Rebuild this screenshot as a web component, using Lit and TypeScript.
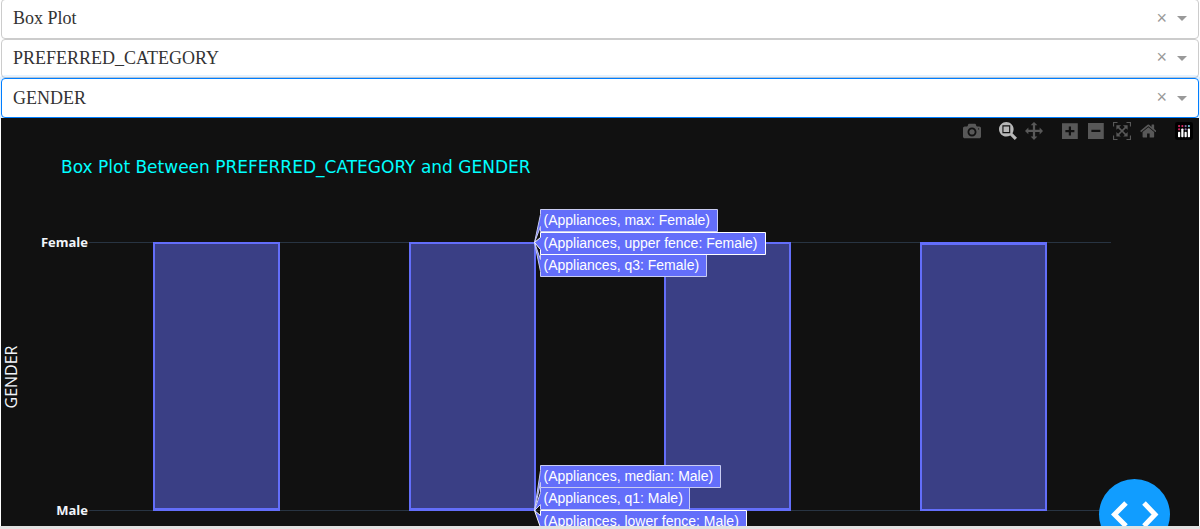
import { LitElement, html, svg, css } from "lit";
import { customElement, property, state } from "lit/decorators.js";

@customElement("clearable-select")
class ClearableSelect extends LitElement {
  @property() label = "";
  @property() value = "";
  @property({ type: Array }) options: string[] = [];
  @property({ type: Boolean }) active = false;

  static styles = css`
    :host {
      display: grid;
      min-height: 0;
    }
    .box {
      grid-area: 1 / 1;
      appearance: none;
      width: 100%;
      min-height: 0;
      margin: 0;
      padding: 0 60px 1px 11px;
      border: 1px solid #ccc;
      border-radius: 4px;
      outline: none;
      background: #fff;
      color: #333;
      font: 18px/20px "Liberation Serif", serif;
    }
    .box.active {
      border-color: #007eff;
      box-shadow: 0 0 0 3px rgba(0, 126, 255, 0.1);
    }
    .tools {
      grid-area: 1 / 1;
      justify-self: end;
      align-self: center;
      display: flex;
      align-items: center;
      gap: 10px;
      padding-right: 12px;
      pointer-events: none;
    }
    .clear {
      pointer-events: auto;
      display: flex;
      padding: 0 0 2px;
      border: 0;
      background: none;
      color: #999;
      font: 18px/18px "Liberation Sans", sans-serif;
    }
    .arrow {
      width: 0;
      border: 5px solid transparent;
      border-top-color: #999;
      border-bottom: 0;
    }
  `;

  clear() {
    this.value = "";
  }

  render() {
    return html`
      <select
        class="box ${this.active ? "active" : ""}"
        aria-label=${this.label}
      >
        ${this.options.map(
          (o) => html`<option ?selected=${o === this.value}>${o}</option>`
        )}
      </select>
      <div class="tools">
        <button class="clear" aria-label="Clear value" @click=${this.clear}>×</button>
        <span class="arrow"></span>
      </div>
    `;
  }
}

const ICONS: Record<string, string> = {
  camera:
    "m500 450c-83 0-150-67-150-150 0-83 67-150 150-150 83 0 150 67 150 150 0 83-67 150-150 150z m400 150h-120c-16 0-34 13-39 29l-31 93c-6 15-23 28-40 28h-340c-16 0-34-13-39-28l-31-94c-6-15-23-28-40-28h-120c-55 0-100-45-100-100v-450c0-55 45-100 100-100h800c55 0 100 45 100 100v450c0 55-45 100-100 100z m-400-550c-138 0-250 112-250 250 0 138 112 250 250 250 138 0 250-112 250-250 0-138-112-250-250-250z m365 380c-19 0-35 16-35 35 0 19 16 35 35 35 19 0 35-16 35-35 0-19-16-35-35-35z",
  zoom:
    "m1000-25l-250 251c40 63 63 138 63 218 0 224-182 406-407 406-224 0-406-182-406-406s183-406 407-406c80 0 155 22 218 62l250-250 125 125z m-812 250l0 438 437 0 0-438-437 0z m62 375l313 0 0-312-313 0 0 312z",
  pan:
    "m1000 350l-187 188 0-125-250 0 0 250 125 0-188 187-187-187 125 0 0-250-250 0 0 125-188-188 186-187 0 125 252 0 0-250-125 0 187-188 188 188-125 0 0 250 250 0 0-126 187 188z",
  plus:
    "m1 787l0-875 875 0 0 875-875 0z m687-500l-187 0 0-187-125 0 0 187-188 0 0 125 188 0 0 187 125 0 0-187 187 0 0-125z",
  minus:
    "m0 788l0-876 875 0 0 876-875 0z m688-500l-500 0 0 125 500 0 0-125z",
  autoscale:
    "m250 850l-187 0-63 0 0-62 0-188 63 0 0 188 187 0 0 62z m688 0l-188 0 0-62 188 0 0-188 62 0 0 188 0 62-62 0z m-875-938l0 188-63 0 0-188 0-62 63 0 187 0 0 62-187 0z m875 188l0-188-188 0 0-62 188 0 62 0 0 62 0 188-62 0z m-125 188l-1 0-93-94-156 156 156 156 92-93 2 0 0 250-250 0 0-2 93-92-156-156-156 156 94 92 0 2-250 0 0-250 0 0 93 93 157-156-157-156-93 94 0 0 0-250 250 0 0 0-94 93 156 157 156-157-93-93 0 0 250 0 0 250z",
  home:
    "m786 296v-267q0-15-11-26t-25-10h-214v214h-143v-214h-214q-15 0-25 10t-11 26v267q0 1 0 2t0 2l321 264 321-264q1-1 1-4z m124 39l-34-41q-5-5-12-6h-2q-7 0-12 3l-386 322-386-322q-7-4-13-4-7 2-12 7l-35 41q-4 5-3 12t6 12l401 334q18 15 42 15t43-15l136-114v109q0 8 5 13t13 5h107q8 0 13-5t5-13v-227l122-102q5-5 6-12t-4-13z",
};

interface Tool {
  icon: string;
  title: string;
  width: number;
  on?: boolean;
}

const TOOL_GROUPS: Tool[][] = [
  [{ icon: "camera", title: "Download plot as a png", width: 1000 }],
  [
    { icon: "zoom", title: "Zoom", width: 1000, on: true },
    { icon: "pan", title: "Pan", width: 1000 },
  ],
  [
    { icon: "plus", title: "Zoom in", width: 875 },
    { icon: "minus", title: "Zoom out", width: 875 },
    { icon: "autoscale", title: "Autoscale", width: 1000 },
    { icon: "home", title: "Reset axes", width: 928 },
  ],
];

const MARGIN = { left: 88, right: 88 };
const FEMALE_Y = 124;
const MALE_Y = 392;

// Which end of each box its median line lies on.
const MEDIANS = [MALE_Y, MALE_Y, MALE_Y, FEMALE_Y];

// Hover labels: anchor height, distance from it, and box width.
const LABELS = [
  { text: "(Appliances, max: Female)", y: FEMALE_Y, dy: -22, w: 177 },
  { text: "(Appliances, q3: Female)", y: FEMALE_Y, dy: 23, w: 166 },
  { text: "(Appliances, upper fence: Female)", y: FEMALE_Y, dy: 1, w: 225, strong: true },
  { text: "(Appliances, median: Male)", y: MALE_Y, dy: -34, w: 180 },
  { text: "(Appliances, q1: Male)", y: MALE_Y, dy: -12, w: 149 },
  { text: "(Appliances, lower fence: Male)", y: MALE_Y, dy: 11, w: 206, strong: true },
];

@customElement("box-plot")
class BoxPlot extends LitElement {
  @state() width = 1198;
  private observer?: ResizeObserver;

  static styles = css`
    :host {
      display: block;
      position: relative;
      overflow: hidden;
      background: #111;
    }
    .plot {
      display: block;
      width: 100%;
      height: 450px;
    }
    .title {
      font: 17px "DejaVu Sans", sans-serif;
      fill: #00ffff;
    }
    .tick {
      font: bold 13px "Open Sans", sans-serif;
      fill: #f2f5fa;
      text-anchor: end;
    }
    .axis {
      font: 16px "Open Sans", sans-serif;
      fill: #f2f5fa;
      text-anchor: middle;
    }
    .grid {
      stroke: #283442;
      stroke-width: 1;
    }
    .bar {
      fill: #636efa;
      fill-opacity: 0.5;
      stroke: #636efa;
      stroke-width: 2;
    }
    .median {
      stroke: #636efa;
      stroke-width: 2;
    }
    .tag {
      fill: #636efa;
      stroke: #c9ccf2;
      stroke-width: 1;
    }
    .tag.strong {
      stroke: #fff;
    }
    .tag-text {
      font: 14px "Liberation Sans", sans-serif;
      fill: #fff;
    }
    .modebar {
      position: absolute;
      top: 4px;
      right: 2px;
      display: flex;
      gap: 10px;
    }
    .group {
      display: flex;
    }
    .tool {
      display: flex;
      justify-content: center;
      width: 26px;
      padding: 0;
      border: 0;
      background: none;
      fill: rgba(255, 255, 255, 0.3);
    }
    .tool.on {
      fill: rgba(255, 255, 255, 0.7);
    }
    .icon {
      display: block;
      height: 18px;
    }
    .fab {
      position: absolute;
      right: 29px;
      bottom: -24px;
      display: flex;
      align-items: center;
      justify-content: center;
      width: 71px;
      height: 71px;
      padding: 0;
      border: 0;
      border-radius: 50%;
      background: #119dff;
    }
  `;

  connectedCallback() {
    super.connectedCallback();
    this.observer = new ResizeObserver(() => {
      this.width = this.clientWidth;
    });
    this.observer.observe(this);
  }

  disconnectedCallback() {
    super.disconnectedCallback();
    this.observer?.disconnect();
  }

  renderTag(x: number, l: (typeof LABELS)[number]) {
    const h = 22;
    const d = `M0,0L6,${l.dy + 6}v${h / 2 - 6}h${l.w}v-${h}H6V${l.dy - 6}Z`;
    return svg`
      <g transform="translate(${x - 0.5} ${l.y + 0.5})">
        <path class="tag ${l.strong ? "strong" : ""}" d=${d}></path>
        <text class="tag-text" x="9" y=${l.dy + 4}>${l.text}</text>
      </g>`;
  }

  render() {
    const right = this.width - MARGIN.right;
    const step = (right - MARGIN.left) / MEDIANS.length;
    const half = step * 0.245;
    const center = (i: number) => MARGIN.left + step * (i + 0.5);
    return html`
      <svg class="plot" role="img" aria-label="Box plot">
        <text class="title" x="60" y="55">Box Plot Between PREFERRED_CATEGORY and GENDER</text>
        ${[FEMALE_Y, MALE_Y].map(
          (y) => svg`<line class="grid" x1=${MARGIN.left} x2=${right} y1=${y + 0.5} y2=${y + 0.5}></line>`
        )}
        <text class="tick" x="87" y="129">Female</text>
        <text class="tick" x="87" y="397">Male</text>
        <text class="axis" transform="translate(16 259) rotate(-90)">GENDER</text>
        ${MEDIANS.map((m, i) => {
          const x = Math.round(center(i) - half);
          const w = Math.round(half * 2);
          const my = m === MALE_Y ? MALE_Y - 1 : FEMALE_Y + 2;
          return svg`
            <rect class="bar" x=${x} y=${FEMALE_Y + 1} width=${w} height=${MALE_Y - FEMALE_Y - 1}></rect>
            <line class="median" x1=${x} x2=${x + w} y1=${my} y2=${my}></line>`;
        })}
        ${LABELS.map((l) => this.renderTag(Math.round(center(1) + half), l))}
      </svg>
      <div class="modebar">
        ${TOOL_GROUPS.map(
          (g) => html`<div class="group">
            ${g.map(
              (t) => html`<button class="tool ${t.on ? "on" : ""}" aria-label=${t.title}>
                <svg class="icon" viewBox="0 0 ${t.width} 1000">
                  <path transform="matrix(1 0 0 -1 0 850)" d=${ICONS[t.icon]}></path>
                </svg>
              </button>`
            )}
          </div>`
        )}
        <div class="group">
          <button class="tool" aria-label="Produced with Plotly">
            <svg class="icon" viewBox="0 0 132 132">
              <rect fill="#000" width="132" height="132" rx="18"></rect>
              <g fill="#d92a63">
                <circle cx="30" cy="30" r="8"></circle>
                <circle cx="30" cy="54" r="8"></circle>
                <circle cx="54" cy="30" r="8"></circle>
              </g>
              <circle cx="78" cy="30" r="8" fill="#8a6fa8"></circle>
              <circle cx="78" cy="54" r="8" fill="#8a6fa8"></circle>
              <circle cx="102" cy="30" r="8" fill="#76c8dd"></circle>
              <g fill="#fff">
                <rect x="22" y="72" width="16" height="40" rx="6"></rect>
                <rect x="46" y="48" width="16" height="64" rx="6"></rect>
                <rect x="70" y="72" width="16" height="40" rx="6"></rect>
                <rect x="94" y="48" width="16" height="64" rx="6"></rect>
              </g>
            </svg>
          </button>
        </div>
      </div>
      <button class="fab" aria-label="Debug menu">
        <svg width="48" height="30" viewBox="0 0 48 30" fill="none" stroke="#fff" stroke-width="5">
          <path d="M15 3L3.500 14.500L15 26M33 3L44 14.500L33 26"></path>
        </svg>
      </button>
    `;
  }
}

const COLUMNS = ["PREFERRED_CATEGORY", "GENDER"];

@customElement("app-root")
class AppRoot extends LitElement {
  static styles = css`
    :host {
      display: flex;
      flex-direction: column;
      height: 100vh;
      overflow: hidden;
      background: #fff;
    }
    .fields {
      display: grid;
      grid-template-rows: repeat(3, 1fr);
      flex: none;
      height: 119px;
      margin: -1px 1px 0;
    }
    .chart {
      flex: 1;
      min-height: 0;
      margin: 0 1px;
    }
    .track {
      flex: none;
      height: 3px;
      background: #e2e2e2;
    }
  `;

  render() {
    return html`
      <div class="fields">
        <clearable-select label="Plot type" value="Box Plot" .options=${["Box Plot"]}></clearable-select>
        <clearable-select label="X axis" value="PREFERRED_CATEGORY" .options=${COLUMNS}></clearable-select>
        <clearable-select label="Y axis" value="GENDER" .options=${COLUMNS} active></clearable-select>
      </div>
      <box-plot class="chart"></box-plot>
      <div class="track"></div>
    `;
  }
}
